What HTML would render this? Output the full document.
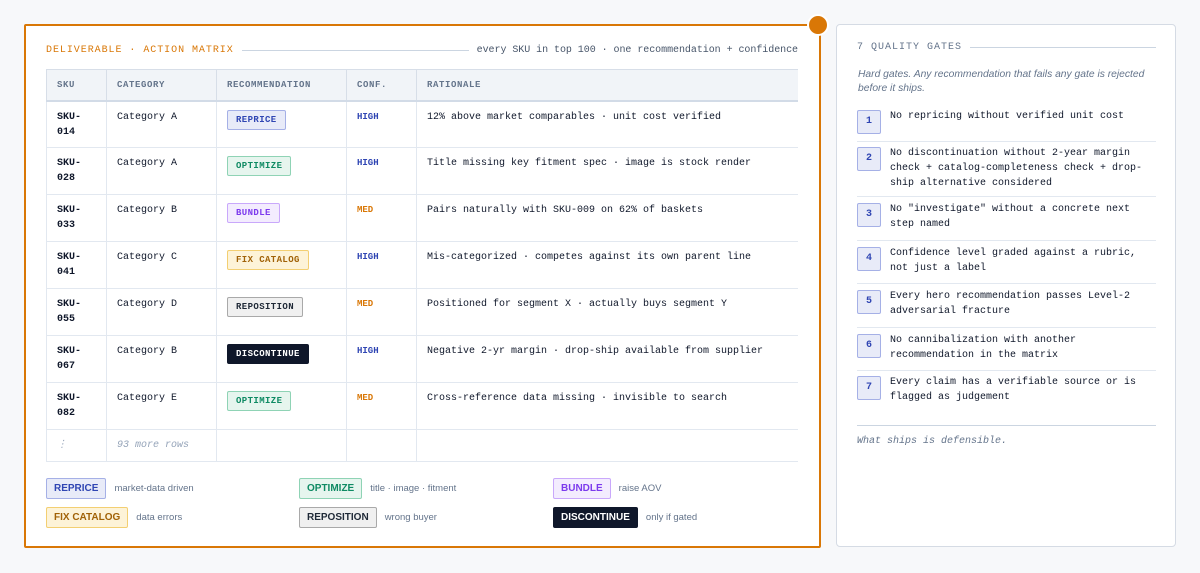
<!DOCTYPE html>
<html><head><meta charset="utf-8"><style>
*{box-sizing:border-box;margin:0;padding:0}
body{width:1200px;height:573px;background:#f7f8fa;font-family:"Liberation Mono",monospace;color:#0f172a;position:relative;overflow:hidden}
.left{position:absolute;left:24px;top:24px;width:797px;height:524px;border:2px solid #d97706;background:#fff;border-radius:2px}
.dot{position:absolute;left:807px;top:14px;width:22px;height:22px;border-radius:50%;background:#d97706;border:2px solid #fff}
.ttl{position:absolute;left:20px;top:17px;width:752px;height:14px;display:flex;align-items:center;font-size:10px}
.ttl .a{color:#d97706;letter-spacing:.95px}
.ttl .ln{flex:1;height:1px;background:#cbd5e1;margin:0 8px}
.ttl .b{color:#475569;letter-spacing:-.05px}
table{position:absolute;left:20px;top:43px;width:752px;border-collapse:collapse;font-size:10px}
th{background:#f1f4f8;height:31px;text-align:left;font-weight:bold;color:#64748b;font-size:9px;letter-spacing:.6px;padding:0 10px;border:1px solid #d7dee8;border-bottom:2px solid #d2dbe7}
td{height:47px;vertical-align:top;padding:8px 10px 0;border:1px solid #e2e8f0;line-height:15px}
tr td:last-child,tr th:last-child{border-right:none}
.sku{font-weight:bold}
.bd{display:inline-block;height:20px;line-height:18px;padding:0 8px;font-size:9px;font-weight:bold;letter-spacing:.4px;border:1px solid;border-radius:2px;margin-top:0}
.rp{background:#e8ebf8;border-color:#a5b0e6;color:#2f45b3}
.op{background:#e6f5ee;border-color:#8fd3b5;color:#0e8a63}
.bu{background:#f3ecfe;border-color:#c9a8fb;color:#7c3aed}
.fc{background:#fdf3d8;border-color:#f3cf72;color:#a16207}
.re{background:#f0f0f0;border-color:#a9a9a9;color:#1f2937}
.dc{background:#0f172a;border-color:#0f172a;color:#fff}
.hi{color:#2f45b3;font-weight:bold;font-size:9px}
.me{color:#d97706;font-weight:bold;font-size:9px}
.more td{height:32px;color:#94a3b8;font-style:italic;padding-top:8px}
.leg{position:absolute;font-family:"Liberation Sans",sans-serif;font-size:9.5px;color:#64748b;display:flex;align-items:center}
.leg .bd{font-family:"Liberation Sans",sans-serif;font-size:10px;letter-spacing:0;height:21px;line-height:19px;margin:0 8px 0 0;padding:0 7px}
.right{position:absolute;left:836px;top:24px;width:340px;height:523px;border:1px solid #d5dbe4;background:#fff;border-radius:4px}
.rt{position:absolute;left:20px;top:17px;width:299px;display:flex;align-items:center;font-size:10px;color:#64748b;letter-spacing:1px}
.rt .ln{flex:1;height:1px;background:#cbd5e1;margin-left:8px}
.hint{position:absolute;left:21px;top:43px;width:300px;font-family:"Liberation Sans",sans-serif;font-style:italic;font-size:10.3px;line-height:14px;color:#64748b}
.g{position:absolute;left:20px;width:299px;display:flex;font-size:10px;line-height:15px;border-bottom:1px solid #e2e8f0}
.g .n{width:24px;height:24px;flex:none;background:#e8ebf8;border:1px solid #a5b0e6;border-radius:2px;color:#2f45b3;font-weight:bold;font-size:10px;text-align:center;line-height:22px;margin-right:9px;margin-top:-1px}
.g span:last-child{margin-top:-2px}
.foot{position:absolute;left:20px;top:400px;width:299px;border-top:1px solid #cbd5e1;padding-top:10px;font-size:10px;color:#64748b;font-style:italic}
</style></head><body>
<div class="left">
<div class="ttl"><span class="a">DELIVERABLE · ACTION MATRIX</span><span class="ln"></span><span class="b">every SKU in top 100 · one recommendation + confidence</span></div>
<table>
<colgroup><col style="width:60px"><col style="width:110px"><col style="width:130px"><col style="width:70px"><col></colgroup>
<tr><th>SKU</th><th>CATEGORY</th><th>RECOMMENDATION</th><th>CONF.</th><th>RATIONALE</th></tr>
<tr><td class="sku">SKU-<br>014</td><td>Category A</td><td><span class="bd rp">REPRICE</span></td><td class="hi">HIGH</td><td>12% above market comparables · unit cost verified</td></tr>
<tr><td class="sku">SKU-<br>028</td><td>Category A</td><td><span class="bd op">OPTIMIZE</span></td><td class="hi">HIGH</td><td>Title missing key fitment spec · image is stock render</td></tr>
<tr><td class="sku">SKU-<br>033</td><td>Category B</td><td><span class="bd bu">BUNDLE</span></td><td class="me">MED</td><td>Pairs naturally with SKU-009 on 62% of baskets</td></tr>
<tr><td class="sku">SKU-<br>041</td><td>Category C</td><td><span class="bd fc">FIX CATALOG</span></td><td class="hi">HIGH</td><td>Mis-categorized · competes against its own parent line</td></tr>
<tr><td class="sku">SKU-<br>055</td><td>Category D</td><td><span class="bd re">REPOSITION</span></td><td class="me">MED</td><td>Positioned for segment X · actually buys segment Y</td></tr>
<tr><td class="sku">SKU-<br>067</td><td>Category B</td><td><span class="bd dc">DISCONTINUE</span></td><td class="hi">HIGH</td><td>Negative 2-yr margin · drop-ship available from supplier</td></tr>
<tr><td class="sku">SKU-<br>082</td><td>Category E</td><td><span class="bd op">OPTIMIZE</span></td><td class="me">MED</td><td>Cross-reference data missing · invisible to search</td></tr>
<tr class="more"><td>⋮</td><td>93 more rows</td><td></td><td></td><td></td></tr>
</table>
<div class="leg" style="left:20px;top:452px"><span class="bd rp">REPRICE</span>market-data driven</div>
<div class="leg" style="left:273px;top:452px"><span class="bd op">OPTIMIZE</span>title · image · fitment</div>
<div class="leg" style="left:527px;top:452px"><span class="bd bu">BUNDLE</span>raise AOV</div>
<div class="leg" style="left:20px;top:481px"><span class="bd fc">FIX CATALOG</span>data errors</div>
<div class="leg" style="left:273px;top:481px"><span class="bd re">REPOSITION</span>wrong buyer</div>
<div class="leg" style="left:527px;top:481px"><span class="bd dc" style="color:#fff">DISCONTINUE</span>only if gated</div>
</div>
<div class="dot"></div>
<div class="right">
<div class="rt">7 QUALITY GATES<span class="ln"></span></div>
<div class="hint">Hard gates. Any recommendation that fails any gate is rejected before it ships.</div>
<div class="g" style="top:86px;height:31px"><span class="n">1</span><span>No repricing without verified unit cost</span></div>
<div class="g" style="top:123px;height:49px"><span class="n">2</span><span>No discontinuation without 2-year margin check + catalog-completeness check + drop-ship alternative considered</span></div>
<div class="g" style="top:179px;height:37px"><span class="n">3</span><span>No "investigate" without a concrete next step named</span></div>
<div class="g" style="top:223px;height:36px"><span class="n">4</span><span>Confidence level graded against a rubric, not just a label</span></div>
<div class="g" style="top:266px;height:37px"><span class="n">5</span><span>Every hero recommendation passes Level-2 adversarial fracture</span></div>
<div class="g" style="top:310px;height:36px"><span class="n">6</span><span>No cannibalization with another recommendation in the matrix</span></div>
<div class="g" style="top:352px;height:37px;border-bottom:none"><span class="n">7</span><span>Every claim has a verifiable source or is flagged as judgement</span></div>
<div class="foot">What ships is defensible.</div>
</div>
</body></html>
